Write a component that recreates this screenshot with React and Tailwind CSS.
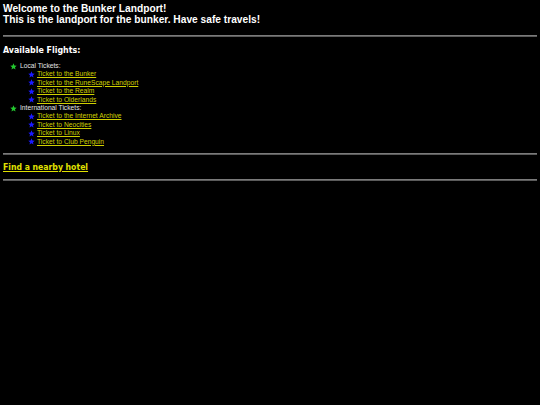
import React from "react";

const local = [
  "Ticket to the Bunker",
  "Ticket to the RuneScape Landport",
  "Ticket to the Realm",
  "Ticket to Olderlands",
];

const intl = [
  "Ticket to the Internet Archive",
  "Ticket to Neocities",
  "Ticket to Linux",
  "Ticket to Club Penguin",
];

const verdana = { fontFamily: '"DejaVu Sans Condensed", "DejaVu Sans", Verdana, sans-serif' };

function Star({ color }) {
  return (
    <svg width="7" height="7" viewBox="0 0 24 24" className="shrink-0">
      <path
        d="M12 1l3.2 7.3 7.8.7-5.9 5.2 1.8 7.8L12 18l-6.9 4 1.8-7.8L1 9l7.8-.7z"
        fill={color}
      />
    </svg>
  );
}

function Hr() {
  return <div className="h-[2px] bg-[#7a7a7a] border-b border-[#5a5a5a]" />;
}

function Group({ title, items }) {
  return (
    <div>
      <div className="flex items-center gap-[3px] pl-[7px] h-[8.4px]">
        <Star color="#22c82e" />
        <span className="text-[#e6e6e6]">{title}</span>
      </div>
      {items.map((t) => (
        <div key={t} className="flex items-center gap-[2px] pl-[25px] h-[8.4px]">
          <Star color="#1a1aff" />
          <a href="#" className="text-[#d0d000] underline">
            {t}
          </a>
        </div>
      ))}
    </div>
  );
}

export default function App() {
  return (
    <div
      className="min-h-[405px] w-[540px] bg-black text-white px-[3px] pt-[3px]"
      style={{ fontFamily: '"Liberation Sans", Arial, sans-serif' }}
    >
      <div className="font-bold text-[10.2px] leading-[11px]">
        <p>Welcome to the Bunker Landport!</p>
        <p>This is the landport for the bunker. Have safe travels!</p>
      </div>

      <div className="mt-[10px]">
        <Hr />
      </div>

      <h2 className="font-bold text-[8.8px] leading-[12px] mt-[7px]" style={verdana}>
        Available Flights:
      </h2>

      <div className="mt-[6px] text-[6.7px] leading-[8.4px]">
        <Group title="Local Tickets:" items={local} />
        <Group title="International Tickets:" items={intl} />
      </div>

      <div className="mt-[7px]">
        <Hr />
      </div>

      <a
        href="#"
        className="block mt-[6px] font-bold text-[8.6px] leading-[12px] text-[#e0e000] underline"
        style={verdana}
      >
        Find a nearby hotel
      </a>

      <div className="mt-[6px]">
        <Hr />
      </div>
    </div>
  );
}
